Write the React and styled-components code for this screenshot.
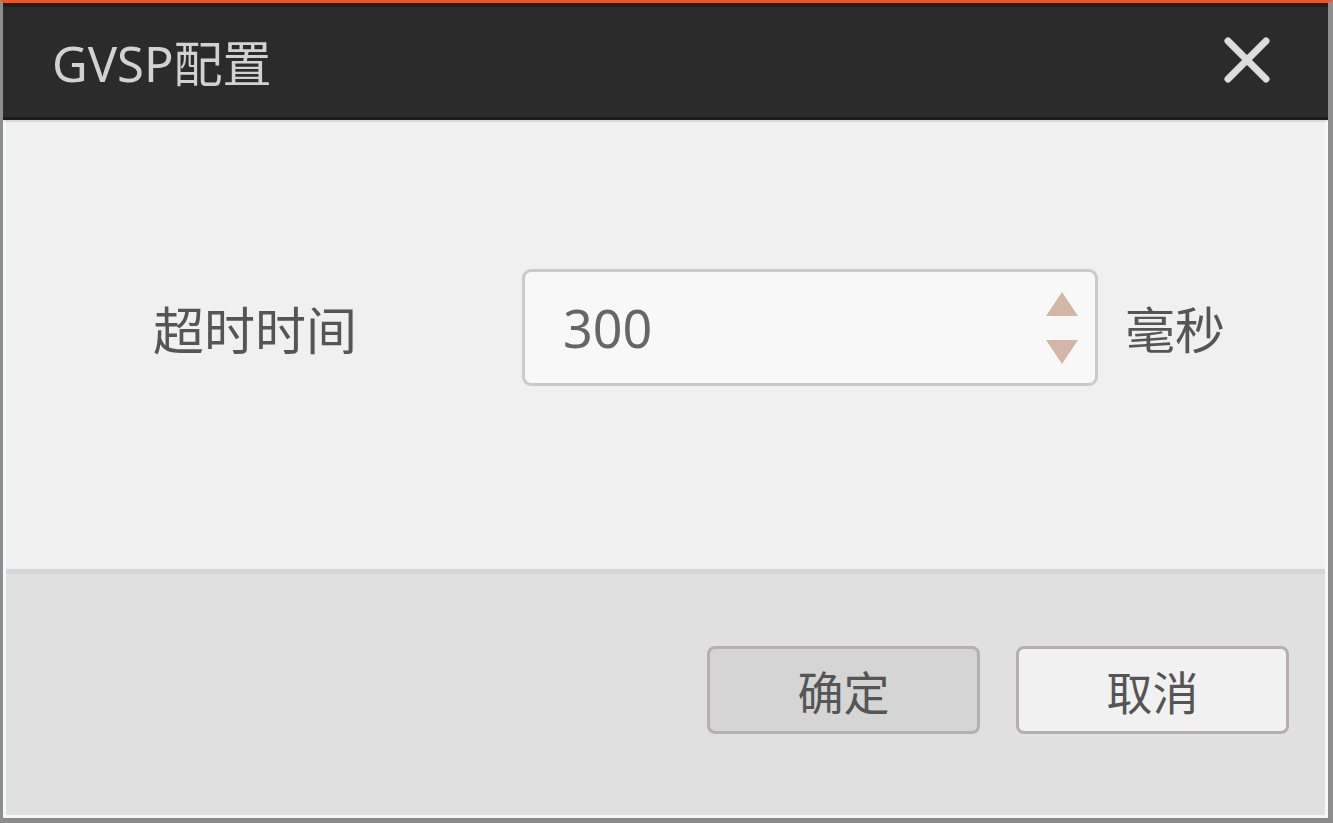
import React from "react";
import styled, { createGlobalStyle } from "styled-components";

const GlobalStyle = createGlobalStyle`
html, body {
  margin: 0;
  padding: 0;
  background: #ffffff;
}
body {
  font-family: "Noto Sans", "Noto Sans CJK SC", sans-serif;
}
`

const Frame = styled.div`
width: 1333px;
height: 823px;
box-sizing: border-box;
display: flex;
flex-direction: column;
border-top: 3px solid #ee5528;
border-left: 3px solid #8e8e8e;
border-right: 5px solid #8e8e8e;
border-bottom: 5px solid #8a8a8a;
background: #f0f0f0;
`

const TitleBar = styled.div`
height: 117px;
box-sizing: border-box;
flex-shrink: 0;
display: flex;
align-items: center;
justify-content: space-between;
padding: 0 57px 4px 49px;
background: #2b2b2b;
border-top: 4px solid #1b2321;
border-bottom: 3px solid #1c1c1c;
`

const Title = styled.h1`
margin: 0;
font-size: 49px;
font-weight: 400;
color: #d2d2d2;
`

const CloseButton = styled.button`
border: none;
background: transparent;
padding: 0;
display: flex;
cursor: pointer;
`

const Inner = styled.div`
flex: 1;
display: flex;
flex-direction: column;
border-top: 2px solid #d8d8d8;
border-left: 3px solid #f6f9f9;
border-right: 3px solid #f6f9f9;
border-bottom: 3px solid #f4f8f8;
`

const Body = styled.div`
height: 447px;
box-sizing: border-box;
padding: 147px 0 0 147px;
display: flex;
align-items: flex-start;
background: #f0f0f0;
`

const Row = styled.div`
display: flex;
align-items: center;
`

const Label = styled.span`
width: 369px;
font-size: 51px;
color: #555555;
`

const SpinBox = styled.div`
width: 576px;
height: 117px;
box-sizing: border-box;
border: 3px solid #cacaca;
border-radius: 9px;
background: #f8f8f8;
display: flex;
align-items: center;
justify-content: space-between;
padding: 0 17px 0 38px;
`

const Value = styled.span`
font-size: 52px;
color: #666666;
`

const Arrows = styled.div`
display: flex;
flex-direction: column;
gap: 24px;
`

const Arrow = styled.span`
width: 0;
height: 0;
border-left: 16px solid transparent;
border-right: 16px solid transparent;
${props => props.$down
  ? "border-top: 24px solid #d2b7a6;"
  : "border-bottom: 24px solid #d2b7a6;"}
`

const Unit = styled.span`
margin-left: 27px;
font-size: 50px;
color: #555555;
`

const Footer = styled.div`
flex: 1;
display: flex;
justify-content: flex-end;
align-items: flex-start;
gap: 36px;
padding: 72px 36px 0 0;
background: #e0e0e0;
border-top: 5px solid #d4d7da;
`

const Button = styled.button`
width: 273px;
height: 88px;
box-sizing: border-box;
border: 3px solid #b4b0b0;
border-radius: 8px;
background: ${props => props.$primary ? "#d5d5d5" : "#f1f1f1"};
font-family: "Noto Sans", "Noto Sans CJK SC", sans-serif;
font-size: 46px;
color: #555555;
display: flex;
align-items: center;
justify-content: center;
padding: 0;
cursor: pointer;
`

const CloseIcon = () => (
  <svg width="48" height="46" viewBox="0 0 48 46">
    <path d="M5 4 L43 42 M43 4 L5 42" stroke="#dddddd" strokeWidth="7" strokeLinecap="round" />
  </svg>
)

const App = () => {
  return (
    <>
      <GlobalStyle />
      <Frame>
        <TitleBar>
          <Title>GVSP配置</Title>
          <CloseButton aria-label="close"><CloseIcon /></CloseButton>
        </TitleBar>
        <Inner>
          <Body>
            <Row>
              <Label>超时时间</Label>
              <SpinBox>
                <Value>300</Value>
                <Arrows>
                  <Arrow />
                  <Arrow $down />
                </Arrows>
              </SpinBox>
              <Unit>毫秒</Unit>
            </Row>
          </Body>
          <Footer>
            <Button $primary>确定</Button>
            <Button>取消</Button>
          </Footer>
        </Inner>
      </Frame>
    </>
  )
}

export default App
